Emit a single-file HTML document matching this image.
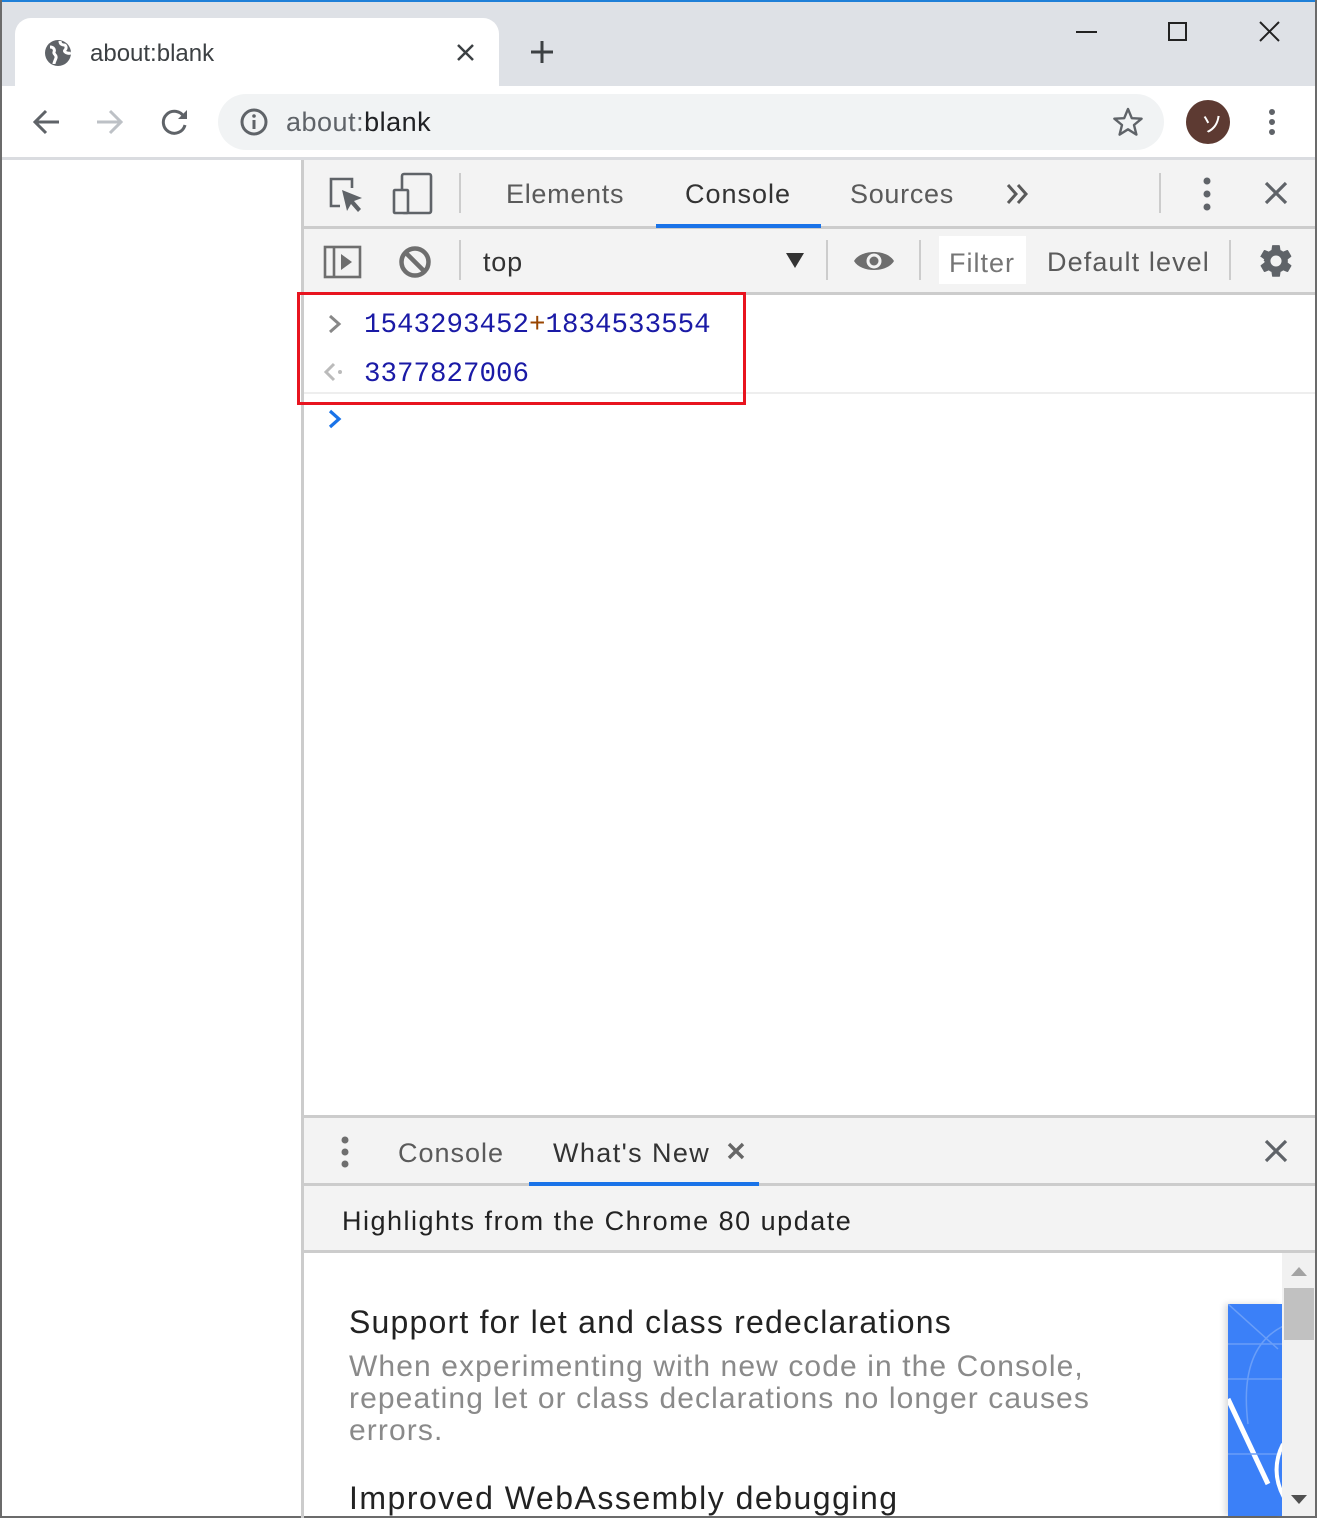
<!DOCTYPE html>
<html><head><meta charset="utf-8"><style>
*{margin:0;padding:0;box-sizing:border-box}
body{width:1317px;height:1518px;position:relative;overflow:hidden;background:#fff;font-family:"Liberation Sans",sans-serif;color:#333}
.a{position:absolute}
.t{position:absolute;white-space:nowrap}
svg{position:absolute;overflow:visible}
</style></head><body>
<div class="a" style="left:0;top:0;width:1317px;height:86px;background:#dee1e6"></div>
<div class="a" style="left:0;top:0;width:1317px;height:2px;background:#1f80d8"></div>
<div class="a" style="left:0;top:0;width:2px;height:1518px;background:#6b6b6b"></div>
<div class="a" style="left:1315px;top:0;width:2px;height:1518px;background:#6b6b6b"></div>
<div class="a" style="left:0;top:1516px;width:1317px;height:2px;background:#6b6b6b"></div>
<div class="a" style="left:15px;top:18px;width:484px;height:70px;background:#fff;border-radius:16px 16px 0 0"></div>
<svg style="left:44px;top:38px" width="30" height="30" viewBox="0 0 30 30"><circle cx="14" cy="15" r="13" fill="#5f6368"/><path d="M6 9c4 0 5 3 4 5s3 3 2 6-2 4-2 6M16 3c0 3 2 4 4 4s3 3 1 5 3 4 6 3" stroke="#fff" stroke-width="3" fill="none"/></svg>
<div class="t" style="left:90px;top:40px;font-size:24px;color:#3c4043">about:blank</div>
<svg style="left:457px;top:44px" width="17" height="17"><path d="M1 1L16 16M16 1L1 16" stroke="#3c4043" stroke-width="2.5"/></svg>
<svg style="left:530px;top:40px" width="24" height="24"><path d="M12 1V23M1 12H23" stroke="#3c4043" stroke-width="3"/></svg>
<svg style="left:1076px;top:20px" width="220" height="24"><path d="M0 12H21" stroke="#222" stroke-width="2"/><rect x="93" y="3" width="17" height="17" fill="none" stroke="#222" stroke-width="2"/><path d="M184 2L203 21M203 2L184 21" stroke="#222" stroke-width="2"/></svg>
<div class="a" style="left:2px;top:157px;width:1313px;height:3px;background:#dadce0"></div>
<svg style="left:32px;top:108px" width="30" height="30"><path d="M27 14H3M14 3L3 14L14 25" stroke="#5f6368" stroke-width="3" fill="none"/></svg>
<svg style="left:95px;top:108px" width="30" height="30"><path d="M2 14H26M15 3L26 14L15 25" stroke="#bdc1c6" stroke-width="3" fill="none"/></svg>
<svg style="left:160px;top:107px" width="30" height="30"><path d="M24 10A11 11 0 1 0 25 18" stroke="#5f6368" stroke-width="3" fill="none"/><path d="M27 3V12H18Z" fill="#5f6368"/></svg>
<div class="a" style="left:218px;top:94px;width:946px;height:56px;background:#f1f3f4;border-radius:28px"></div>
<svg style="left:240px;top:108px" width="30" height="30"><circle cx="14" cy="14" r="12" fill="none" stroke="#5f6368" stroke-width="3"/><path d="M14 12V21" stroke="#5f6368" stroke-width="3"/><circle cx="14" cy="8" r="1.8" fill="#5f6368"/></svg>
<div class="t" style="left:286px;top:107px;font-size:27px;letter-spacing:0.5px;color:#5f6368">about:<span style="color:#202124">blank</span></div>
<svg style="left:1112px;top:106px" width="32" height="32"><path d="M16 3L19.8 12.2L29.6 12.7L22 19L24.4 28.6L16 23.3L7.6 28.6L10 19L2.4 12.7L12.2 12.2Z" fill="none" stroke="#5f6368" stroke-width="2.4" stroke-linejoin="round"/></svg>
<div class="a" style="left:1186px;top:100px;width:44px;height:44px;border-radius:50%;background:#5d3a32"></div>
<div class="t" style="left:1201px;top:107px;font-size:22px;color:#fff">ソ</div>
<svg style="left:1266px;top:108px" width="12" height="30"><circle cx="6" cy="4" r="3" fill="#5f6368"/><circle cx="6" cy="14" r="3" fill="#5f6368"/><circle cx="6" cy="24" r="3" fill="#5f6368"/></svg>
<div class="a" style="left:301px;top:160px;width:3px;height:1358px;background:#ccc"></div>
<div class="a" style="left:304px;top:160px;width:1011px;height:68px;background:#f3f3f3"></div>
<div class="a" style="left:304px;top:226px;width:1011px;height:3px;background:#ccc"></div>
<div class="a" style="left:656px;top:224px;width:165px;height:4px;background:#1a73e8"></div>
<svg style="left:328px;top:176px" width="40" height="40"><path d="M12 30H3V3H24V12" stroke="#5f6368" stroke-width="2.6" fill="none"/><path d="M14 14L34 22L26 25L33 33L30 36L23 28L19 35Z" fill="#5f6368"/></svg>
<svg style="left:392px;top:172px" width="40" height="44"><rect x="10" y="2" width="29" height="39" rx="2" fill="none" stroke="#5f6368" stroke-width="2.6"/><rect x="2" y="18" width="14" height="23" rx="1" fill="#f3f3f3" stroke="#5f6368" stroke-width="2.6"/></svg>
<div class="a" style="left:459px;top:173px;width:2px;height:40px;background:#ccc"></div>
<div class="t" style="left:506px;top:179px;font-size:27px;letter-spacing:0.7px;color:#5a5a5a">Elements</div>
<div class="t" style="left:685px;top:179px;font-size:27px;letter-spacing:1px;color:#333">Console</div>
<div class="t" style="left:850px;top:179px;font-size:27px;letter-spacing:0.7px;color:#5a5a5a">Sources</div>
<svg style="left:1005px;top:183px" width="24" height="22"><path d="M3 2L11 11L3 20M13 2L21 11L13 20" stroke="#5a5a5a" stroke-width="3" fill="none"/></svg>
<div class="a" style="left:1159px;top:173px;width:2px;height:40px;background:#ccc"></div>
<svg style="left:1200px;top:176px" width="14" height="36"><circle cx="7" cy="5" r="3.5" fill="#5f6368"/><circle cx="7" cy="18" r="3.5" fill="#5f6368"/><circle cx="7" cy="31" r="3.5" fill="#5f6368"/></svg>
<svg style="left:1264px;top:181px" width="24" height="24"><path d="M2 2L22 22M22 2L2 22" stroke="#5f6368" stroke-width="3.2"/></svg>
<div class="a" style="left:304px;top:229px;width:1011px;height:64px;background:#f3f3f3"></div>
<div class="a" style="left:304px;top:292px;width:1011px;height:3px;background:#ccc"></div>
<svg style="left:323px;top:245px" width="40" height="34"><rect x="2" y="2" width="35" height="30" fill="none" stroke="#6e6e6e" stroke-width="2.6"/><path d="M11 2V32" stroke="#6e6e6e" stroke-width="2.6"/><path d="M18 9L29 17L18 25Z" fill="#6e6e6e"/></svg>
<svg style="left:398px;top:245px" width="34" height="34"><circle cx="17" cy="17" r="13.5" fill="none" stroke="#6e6e6e" stroke-width="4.5"/><path d="M8 8L26 26" stroke="#6e6e6e" stroke-width="4.5"/></svg>
<div class="a" style="left:459px;top:240px;width:2px;height:40px;background:#ccc"></div>
<div class="t" style="left:483px;top:247px;font-size:27px;letter-spacing:0.8px;color:#333">top</div>
<svg style="left:786px;top:253px" width="18" height="16"><path d="M0 0H18L9 15Z" fill="#333"/></svg>
<div class="a" style="left:826px;top:240px;width:2px;height:40px;background:#ccc"></div>
<svg style="left:853px;top:247px" width="42" height="28"><path d="M1 14C8 2 34 2 41 14C34 26 8 26 1 14Z" fill="#6e6e6e"/><circle cx="21" cy="14" r="7.5" fill="#f3f3f3"/><circle cx="21" cy="14" r="4.5" fill="#6e6e6e"/></svg>
<div class="a" style="left:919px;top:240px;width:2px;height:40px;background:#ccc"></div>
<div class="a" style="left:939px;top:236px;width:87px;height:48px;background:#fff"></div>
<div class="t" style="left:949px;top:248px;font-size:27px;letter-spacing:1px;color:#757575">Filter</div>
<div class="t" style="left:1047px;top:247px;font-size:27px;letter-spacing:1.1px;color:#5a5a5a">Default level</div>
<div class="a" style="left:1229px;top:240px;width:2px;height:40px;background:#ccc"></div>
<svg style="left:1257px;top:242px" width="38" height="38" viewBox="0 0 24 24"><path fill="#5f6368" d="M19.4 13c.04-.3.06-.6.06-1s-.02-.7-.06-1l2.1-1.6c.2-.15.25-.42.12-.64l-2-3.46c-.12-.22-.39-.3-.61-.22l-2.5 1c-.52-.4-1.080-.73-1.69-.98l-.38-2.65A.49.49 0 0 0 14 2h-4c-.25 0-.46.18-.49.42l-.38 2.65c-.61.25-1.17.59-1.69.98l-2.5-1c-.23-.09-.49 0-.61.22l-2 3.46c-.13.22-.7.49.12.64L4.57 11c-.04.3-.7.66-.07 1s.2.7.06 1l-2.1 1.6c-.2.15-.25.42-.12.64l2 3.46c.12.22.39.3.61.22l2.5-1c.52.4 1.08.73 1.69.98l.38 2.65c.03.24.24.42.49.42h4c.25 0 .46-.18.49-.42l.38-2.65c.61-.25 1.17-.59 1.69-.98l2.5 1c.23.09.49 0 .61-.22l2-3.46c.12-.22.07-.49-.12-.64L19.4 13zM12 15.5a3.5 3.5 0 1 1 0-7 3.5 3.5 0 0 1 0 7z"/></svg>
<div class="a" style="left:304px;top:392px;width:1011px;height:2px;background:#eee"></div>
<svg style="left:328px;top:314px" width="14" height="20"><path d="M2 2L11 10L2 18" stroke="#888" stroke-width="3" fill="none"/></svg>
<div class="t" style="left:364px;top:310px;font-family:'Liberation Mono',monospace;font-size:27.5px;color:#1a1aa6">1543293452<span style="color:#994500">+</span>1834533554</div>
<svg style="left:323px;top:362px" width="22" height="20"><path d="M11 2L3 10L11 18" stroke="#bbb" stroke-width="3" fill="none"/><circle cx="17" cy="10" r="2" fill="#bbb"/></svg>
<div class="t" style="left:364px;top:359px;font-family:'Liberation Mono',monospace;font-size:27.5px;color:#1a1aa6">3377827006</div>
<div class="a" style="left:297px;top:292px;width:449px;height:113px;border:3.5px solid #e8141f"></div>
<svg style="left:328px;top:409px" width="14" height="20"><path d="M2 2L11 10L2 18" stroke="#1a73e8" stroke-width="3.2" fill="none"/></svg>
<div class="a" style="left:304px;top:1115px;width:1011px;height:3px;background:#ccc"></div>
<div class="a" style="left:304px;top:1118px;width:1011px;height:134px;background:#f3f3f3"></div>
<div class="a" style="left:304px;top:1183px;width:1011px;height:3px;background:#ccc"></div>
<div class="a" style="left:304px;top:1250px;width:1011px;height:3px;background:#ccc"></div>
<div class="a" style="left:529px;top:1182px;width:230px;height:4px;background:#1a73e8"></div>
<svg style="left:339px;top:1135px" width="14" height="36"><circle cx="6" cy="5" r="3.5" fill="#6e6e6e"/><circle cx="6" cy="17" r="3.5" fill="#6e6e6e"/><circle cx="6" cy="29" r="3.5" fill="#6e6e6e"/></svg>
<div class="t" style="left:398px;top:1138px;font-size:27px;letter-spacing:1px;color:#5a5a5a">Console</div>
<div class="t" style="left:553px;top:1138px;font-size:27px;letter-spacing:1.4px;color:#333">What's New</div>
<svg style="left:727px;top:1142px" width="18" height="18"><path d="M2 2L16 16M16 2L2 16" stroke="#666" stroke-width="3.4"/></svg>
<svg style="left:1264px;top:1139px" width="24" height="24"><path d="M2 2L22 22M22 2L2 22" stroke="#5f6368" stroke-width="3.2"/></svg>
<div class="t" style="left:342px;top:1206px;font-size:27px;letter-spacing:1.5px;color:#222">Highlights from the Chrome 80 update</div>
<div class="t" style="left:349px;top:1304px;font-size:32px;letter-spacing:1.2px;color:#222">Support for let and class redeclarations</div>
<div class="a" style="left:349px;top:1351px;width:800px;font-size:30px;line-height:32px;letter-spacing:1.1px;color:#8a8a8a">When experimenting with new code in the Console,<br>repeating let or class declarations no longer causes<br>errors.</div>
<div class="t" style="left:349px;top:1480px;font-size:32px;letter-spacing:1.5px;color:#222">Improved WebAssembly debugging</div>
<div class="a" style="left:1228px;top:1304px;width:54px;height:212px;background:#3b80f8;overflow:hidden;box-shadow:-3px 0 6px rgba(0,0,0,.15)">
<svg style="left:0;top:0" width="54" height="212"><path d="M0 95L40 180" stroke="#fff" stroke-width="5"/><path d="M0 40H54M0 75H54M0 150H54" stroke="#6a9ef8" stroke-width="1.5"/><path d="M0 0L50 45" stroke="#6a9ef8" stroke-width="1.5"/><path d="M60 20Q10 40 20 120" stroke="#6a9ef8" stroke-width="1.5" fill="none"/><path d="M55 140Q40 170 60 200" stroke="#fff" stroke-width="4" fill="none"/></svg></div>
<div class="a" style="left:1282px;top:1253px;width:33px;height:263px;background:#f1f1f1"></div>
<svg style="left:1291px;top:1267px" width="16" height="10"><path d="M0 9L8 0L16 9Z" fill="#a3a3a3"/></svg>
<div class="a" style="left:1284px;top:1288px;width:30px;height:52px;background:#c1c1c1"></div>
<svg style="left:1291px;top:1495px" width="16" height="10"><path d="M0 0L8 9L16 0Z" fill="#505050"/></svg>
</body></html>
